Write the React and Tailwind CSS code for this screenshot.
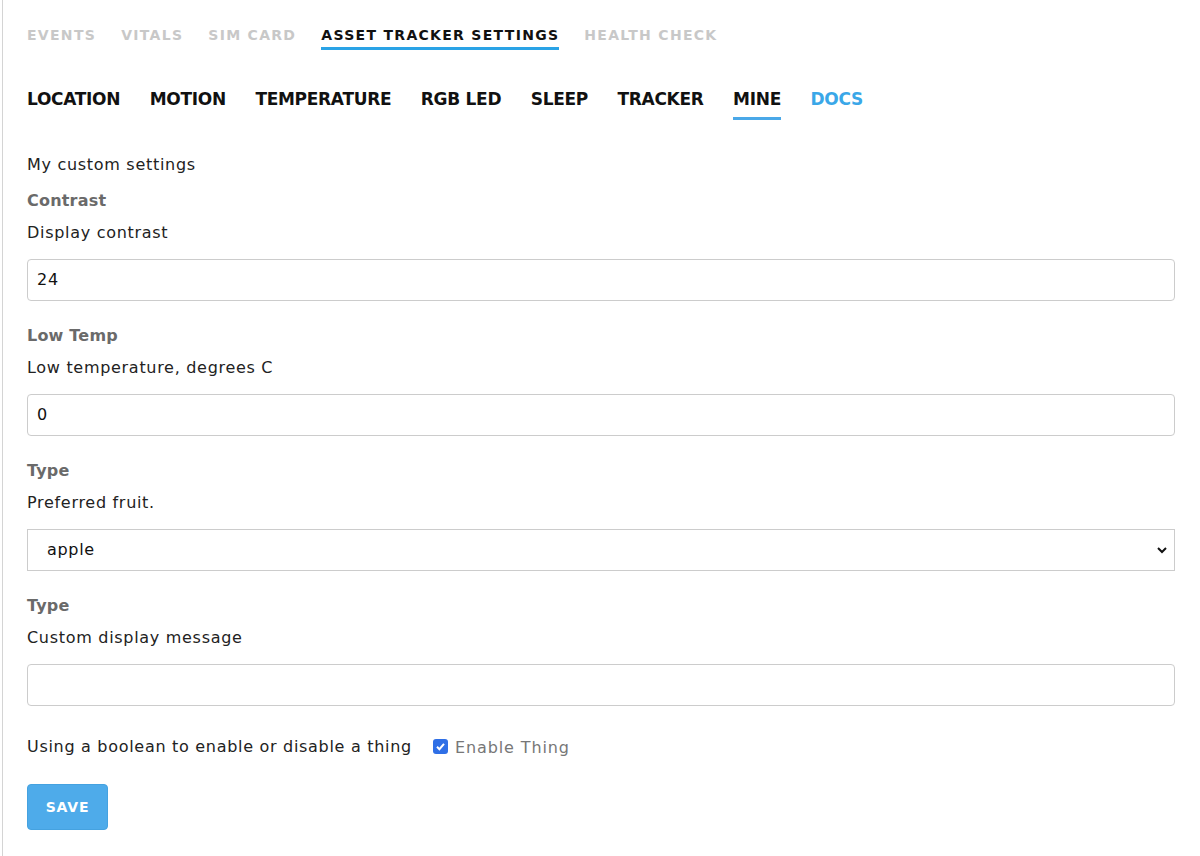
import React from "react";

const font = { fontFamily: '"DejaVu Sans", "Open Sans", sans-serif' };

function Field({ label, desc, children }) {
  return (
    <div className="mb-[24px]">
      <div className="text-[16px] font-bold text-[#6a6a6a] leading-[22px] mt-[1px] tracking-[0.2px]">{label}</div>
      <div className="text-[16px] text-[#222] leading-[22px] mt-[10px] tracking-[0.7px]">{desc}</div>
      <div className="mt-[15px]">{children}</div>
    </div>
  );
}

export default function App() {
  const top = ["EVENTS", "VITALS", "SIM CARD", "ASSET TRACKER SETTINGS", "HEALTH CHECK"];
  const sub = ["LOCATION", "MOTION", "TEMPERATURE", "RGB LED", "SLEEP", "TRACKER", "MINE", "DOCS"];
  return (
    <div className="w-[1200px] h-[856px] bg-white overflow-hidden" style={font}>
      <div className="ml-[2px] h-full border-l border-[#d4d4d4] pl-[24px] pr-[25px]">
        <div className="flex gap-[25px] pt-[26px] h-[52px]">
          {top.map((t) => (
            <div key={t} className="flex flex-col">
              <span
                className={
                  "text-[14px] font-bold tracking-[1.3px] leading-[18px] " +
                  (t === "ASSET TRACKER SETTINGS" ? "text-[#111]" : "text-[#c8c8c8]")
                }
              >
                {t}
              </span>
              {t === "ASSET TRACKER SETTINGS" && <span className="mt-[3px] h-[3px] bg-[#2aa3e6]" />}
            </div>
          ))}
        </div>
        <div className="flex gap-[29.5px] mt-[36px] h-[34px]">
          {sub.map((t) => (
            <div key={t} className="flex flex-col">
              <span
                className={
                  "text-[17px] font-bold leading-[22px] tracking-[-0.3px] " +
                  (t === "DOCS" ? "text-[#3aa7e8]" : "text-[#111]")
                }
              >
                {t}
              </span>
              {t === "MINE" && <span className="mt-[7px] h-[3px] bg-[#4aa8e8]" />}
            </div>
          ))}
        </div>
        <div className="text-[16px] text-[#222] leading-[22px] mt-[32px] tracking-[0.7px]">My custom settings</div>
        <div className="mt-[14px]">
          <Field label="Contrast" desc="Display contrast">
            <div className="h-[42px] border border-[#ccc] rounded-[4px] flex items-center px-[9px] text-[16px] text-[#111] tracking-[0.7px]">24</div>
          </Field>
          <Field label="Low Temp" desc="Low temperature, degrees C">
            <div className="h-[42px] border border-[#ccc] rounded-[4px] flex items-center px-[9px] text-[16px] text-[#111] tracking-[0.7px]">0</div>
          </Field>
          <Field label="Type" desc="Preferred fruit.">
            <div className="h-[42px] border border-[#ccc] flex items-center justify-between pl-[19px] pr-[6px] text-[16px] text-[#111] tracking-[0.7px]">
              <span>apple</span>
              <svg width="12" height="12" viewBox="0 0 12 12"><path d="M2 4 L6 8 L10 4" fill="none" stroke="#111" strokeWidth="2" /></svg>
            </div>
          </Field>
          <Field label="Type" desc="Custom display message">
            <div className="h-[42px] border border-[#ccc] rounded-[4px]" />
          </Field>
        </div>
        <div className="flex items-center mt-[28px] text-[16px] text-[#222] leading-[22px] tracking-[0.7px]">
          <span>Using a boolean to enable or disable a thing</span>
          <span className="ml-[21px] w-[15px] h-[15px] rounded-[3px] bg-[#2f6fe6] flex items-center justify-center">
            <svg width="11" height="11" viewBox="0 0 11 11"><path d="M2 5.8 L4.4 8.2 L9 2.8" fill="none" stroke="white" strokeWidth="2" /></svg>
          </span>
          <span className="ml-[7px] text-[#777] text-[16px] mt-[3px] tracking-[0.9px]">Enable Thing</span>
        </div>
        <button className="mt-[25px] w-[81px] h-[46px] rounded-[4px] bg-[#4eabea] text-white text-[14px] font-bold tracking-[0.8px] border border-[#45a2e0]">SAVE</button>
      </div>
    </div>
  );
}
